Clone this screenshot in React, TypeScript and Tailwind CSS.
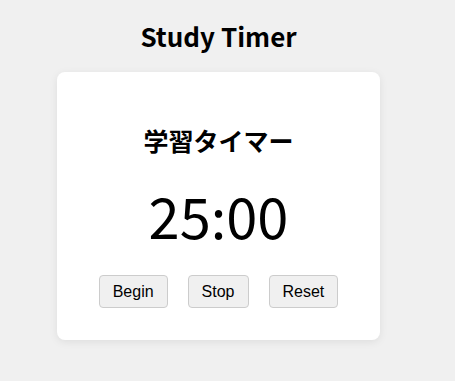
import { useEffect, useState } from "react";

const START = 25 * 60;

function format(sec: number) {
  const m = Math.floor(sec / 60);
  const s = sec % 60;
  return `${String(m).padStart(2, "0")}:${String(s).padStart(2, "0")}`;
}

export default function App() {
  const [left, setLeft] = useState(START);
  const [running, setRunning] = useState(false);

  useEffect(() => {
    if (!running) return;
    const id = window.setInterval(() => {
      setLeft((t) => (t > 0 ? t - 1 : 0));
    }, 1000);
    return () => window.clearInterval(id);
  }, [running]);

  const btn =
    "mx-[10px] h-[33px] rounded-[4px] border border-[#cccccc] bg-[#f0f0f0] px-[13px] text-[16px] text-black font-['Liberation_Sans',Arial,sans-serif]";

  return (
    <div className="min-h-screen bg-[#f0f0f0]">
      <div className="flex w-[437px] flex-col items-center font-['Noto_Sans_CJK_JP',sans-serif] text-black">
        <h1 className="mt-[17px] mb-[18px] text-[26px] font-bold leading-[normal]">
          Study Timer
        </h1>
        <div className="w-[323px] rounded-[8px] bg-white pt-[50px] pb-[32px] text-center shadow-[0_2px_8px_rgba(0,0,0,0.08)]">
          <h2 className="text-[25px] font-bold leading-[normal]">学習タイマー</h2>
          <div className="mt-[16px] text-[56px] leading-[normal]">{format(left)}</div>
          <div className="mt-[20px] flex justify-center">
            <button type="button" className={btn} onClick={() => setRunning(true)}>
              Begin
            </button>
            <button type="button" className={btn} onClick={() => setRunning(false)}>
              Stop
            </button>
            <button
              type="button"
              className={btn}
              onClick={() => {
                setRunning(false);
                setLeft(START);
              }}
            >
              Reset
            </button>
          </div>
        </div>
      </div>
    </div>
  );
}
